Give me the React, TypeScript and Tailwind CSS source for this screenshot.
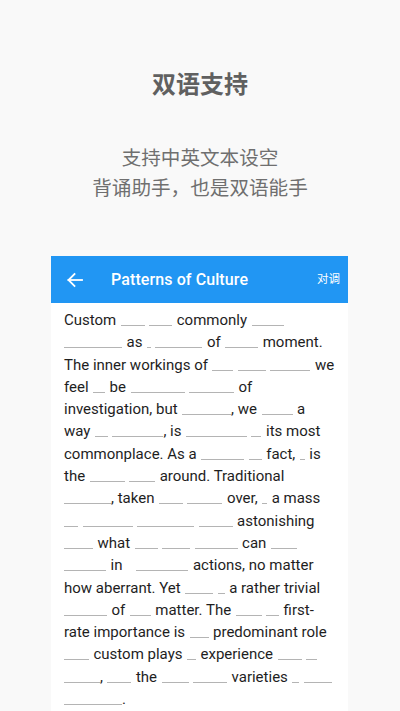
import React from "react";

type Tok = string | number;

const lines: Tok[][] = [
  ["Custom", 24, 23, "commonly", 32],
  [58, "as", 4, 47, "of", 33, "moment."],
  ["The inner workings of", 21, 28, 40, "we"],
  ["feel", 12, "be", 54, 45, "of"],
  ["investigation, but", 49, ", we", 31, "a"],
  ["way", 13, 51, ", is", 61, 10, "its most"],
  ["commonplace. As a", 43, 13, "fact,", 5, "is"],
  ["the", 35, 26, "around. Traditional"],
  [47, ", taken", 24, 35, "over,", 5, "a mass"],
  [14, 50, 57, 34, "astonishing"],
  [29, "what", 23, 28, 43, "can", 26],
  [42, "in", -5, 52, "actions, no matter"],
  ["how aberrant. Yet", 28, 7, "a rather trivial"],
  [43, "of", 21, "matter. The", 26, 13, "first-"],
  ["rate importance is", 19, "predominant role"],
  [25, "custom plays", 9, "experience", 24, 11],
  [36, ",", 24, "the", 27, 34, "varieties", 7, 28],
  [58, "."],
];

function Line({ toks }: { toks: Tok[] }) {
  return (
    <div className="flex items-baseline gap-[4.5px] whitespace-pre h-[22.3px] leading-[22.3px]">
      {toks.map((t, i) => {
        if (typeof t === "number") {
          if (t < 0) return <span key={i} className="inline-block" style={{ width: -t }} />;
          return (
            <span
              key={i}
              className="inline-block h-[14px] border-b border-[#b4b4b4] translate-y-[1px]"
              style={{ width: t }}
            />
          );
        }
        const attached = t.startsWith(",") || t === ".";
        return (
          <span key={i} className={attached ? "-ml-[4.5px]" : ""}>
            {t}
          </span>
        );
      })}
    </div>
  );
}

export default function App() {
  return (
    <div
      className="w-[400px] h-[711px] overflow-hidden bg-[#f9f9f9] flex flex-col items-center"
      style={{ fontFamily: "Roboto, 'Noto Sans CJK SC', sans-serif" }}
    >
      <h1 className="mt-[69px] text-[24px] leading-[32px] font-bold text-[#606060]">
        双语支持
      </h1>
      <div className="mt-[43px] text-[19.6px] leading-[29.5px] text-[#6f6f6f] text-center">
        <div>支持中英文本设空</div>
        <div>背诵助手，也是双语能手</div>
      </div>
      <div className="mt-[53px] ml-[-1px] w-[297px] bg-white flex-1 flex flex-col">
        <div className="h-[47px] bg-[#2196f3] flex items-center text-white">
          <svg
            width="16"
            height="16"
            viewBox="0 0 16 16"
            className="ml-[16px]"
            fill="none"
            stroke="white"
            strokeWidth="1.8"
            strokeLinecap="square"
          >
            <path d="M1.5 8H15" />
            <path d="M7.5 2L1.5 8L7.5 14" />
          </svg>
          <div className="ml-[28px] text-[16px] font-medium tracking-[0.1px]">Patterns of Culture</div>
          <div className="ml-auto mr-[8px] text-[11.5px]">对调</div>
        </div>
        <div className="pl-[13px] pt-[6px] text-[15px] text-[#1e1e1e]">
          {lines.map((l, i) => (
            <Line key={i} toks={l} />
          ))}
        </div>
      </div>
    </div>
  );
}
